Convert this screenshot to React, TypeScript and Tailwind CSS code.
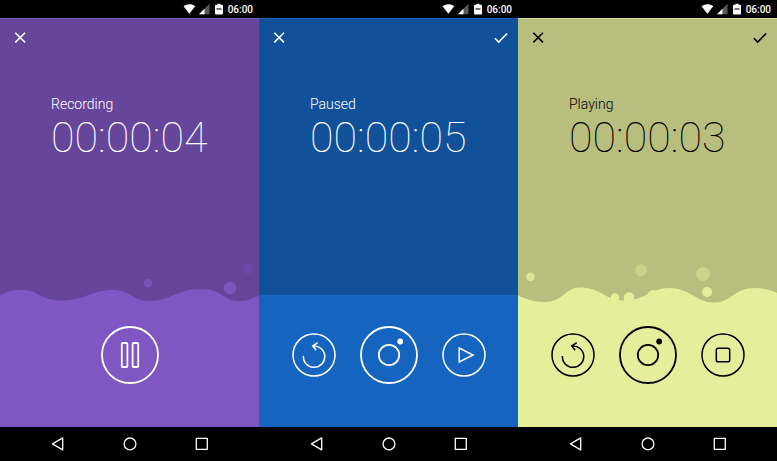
import React from "react";

type Mode = "recording" | "paused" | "playing";

interface Bubble {
  cx: number;
  cy: number;
  r: number;
  opacity: number;
}

interface Screen {
  mode: Mode;
  label: string;
  time: string;
  canConfirm: boolean;
  upper: string;
  lower: string;
  liquid: string;
  ink: string;
  wave: string;
  bubbles: Bubble[];
}

const screens: Screen[] = [
  {
    mode: "recording",
    label: "Recording",
    time: "00:00:04",
    canConfirm: false,
    upper: "bg-[#65469b] border-[#7e57c2]",
    lower: "bg-[#7e57c2]",
    liquid: "text-[#7e57c2]",
    ink: "text-white",
    wave: "M0 35C12 29 25 28 36 33C45 38 50 40.500 62 40.500C84 40.500 92 30 112 30C132 30 132 41 149 41C170 41 178 29 200 29C224 29 222 41 239 41C247 41 253 38.500 259 35.500V46H0Z",
    bubbles: [
      { cx: 148, cy: 23, r: 4.3, opacity: 0.75 },
      { cx: 230, cy: 28, r: 6.3, opacity: 0.9 },
      { cx: 248, cy: 9, r: 5, opacity: 0.3 },
    ],
  },
  {
    mode: "paused",
    label: "Paused",
    time: "00:00:05",
    canConfirm: true,
    upper: "bg-[#11519a] border-[#1565c0]",
    lower: "bg-[#1565c0]",
    liquid: "text-[#1565c0]",
    ink: "text-white",
    wave: "M0 35H259V46H0Z",
    bubbles: [],
  },
  {
    mode: "playing",
    label: "Playing",
    time: "00:00:03",
    canConfirm: true,
    upper: "bg-[#b8be7d] border-[#d3da8f]",
    lower: "bg-[#e6ee9c]",
    liquid: "text-[#e6ee9c]",
    ink: "text-black",
    wave: "M0 35.500C8 39 16 42 26 42C46 42 46 27.500 63 27.500C82 27.500 88 40.500 106 40.500C128 40.500 132 28 151 28C172 28 178 42.500 196 42.500C213 42.500 216 28 237 28C246 28 253 30 259 33V46H0Z",
    bubbles: [
      { cx: 12.5, cy: 16.7, r: 4.3, opacity: 0.8 },
      { cx: 123, cy: 10.3, r: 6, opacity: 0.4 },
      { cx: 185, cy: 14, r: 7, opacity: 0.45 },
      { cx: 189, cy: 32, r: 5, opacity: 0.95 },
      { cx: 97, cy: 37.5, r: 4.3, opacity: 1 },
      { cx: 111, cy: 37.5, r: 5.3, opacity: 1 },
      { cx: 135, cy: 35.5, r: 5.5, opacity: 1 },
    ],
  },
];

function StatusBar() {
  return (
    <div className="flex h-[18px] items-center justify-end gap-[3px] bg-black pr-1.5 text-white">
      <svg className="size-3" viewBox="0 0 12 12" fill="currentColor" aria-hidden="true">
        <path d="M.500 3.200C4 .500 9 .500 12.200 3.200L6.400 10.800Z" />
      </svg>
      <svg className="size-3" viewBox="0 0 12 12" fill="currentColor" aria-hidden="true">
        <path opacity=".35" d="M11.500 .800V11.300H1Z" />
        <path d="M6.500 5.800V11.300H1Z" />
      </svg>
      <svg className="size-3" viewBox="0 0 12 12" aria-hidden="true">
        <path fill="currentColor" d="M4.500 .800h3v1H9.200q.8 0 .8.800v8q0 .8-.8.800H2.800q-.8 0-.8-.800V2.600q0-.8.800-.8h1.700Z" />
        <path stroke="#777" strokeWidth="2" d="M3.500 6h5" />
      </svg>
      <span className="pt-px font-['Roboto',sans-serif] text-[10px] font-medium leading-4">06:00</span>
    </div>
  );
}

function RoundButton({
  label,
  large = false,
  children,
}: {
  label: string;
  large?: boolean;
  children: React.ReactNode;
}) {
  return (
    <button type="button" aria-label={label} className="rounded-full">
      {large ? (
        <svg className="block size-[58px]" viewBox="-29 -29 58 58" fill="none" stroke="currentColor" strokeWidth="1.800" aria-hidden="true">
          <circle r="28" />
          {children}
        </svg>
      ) : (
        <svg className="block size-11" viewBox="-22 -22 44 44" fill="none" stroke="currentColor" strokeWidth="1.500" aria-hidden="true">
          <circle r="21" />
          {children}
        </svg>
      )}
    </button>
  );
}

function Controls({ mode }: { mode: Mode }) {
  if (mode === "recording") {
    return (
      <RoundButton label="Pause" large>
        <rect x="-8.200" y="-12" width="5.600" height="24" rx="1" />
        <rect x="2.600" y="-12" width="5.600" height="24" rx="1" />
      </RoundButton>
    );
  }
  return (
    <>
      <RoundButton label="Restart">
        <path d="M-10.600 1A10.700 10.700 0 1 0 -1 -9" />
        <path d="M3.700 -12.300L-1.300 -9L2.200 -4.700" />
      </RoundButton>
      <RoundButton label="Record" large>
        <circle r="10.200" />
        <circle cx="11.200" cy="-13.500" r="2.900" fill="currentColor" stroke="none" />
      </RoundButton>
      {mode === "paused" ? (
        <RoundButton label="Play">
          <path d="M-4.800 -7V7L9 0Z" />
        </RoundButton>
      ) : (
        <RoundButton label="Stop">
          <rect x="-6.700" y="-6.700" width="13.400" height="13.400" rx="1.800" />
        </RoundButton>
      )}
    </>
  );
}

function NavBar() {
  return (
    <nav className="flex h-[34px] items-center justify-center gap-14 bg-black text-white">
      <button type="button" aria-label="Back" className="size-4">
        <svg className="size-4" viewBox="0 0 16 16" fill="none" stroke="currentColor" strokeWidth="1.300" strokeLinejoin="round" aria-hidden="true">
          <path d="M12.700 1.900V13.900L2.500 7.900Z" />
        </svg>
      </button>
      <button type="button" aria-label="Home" className="size-4">
        <svg className="size-4" viewBox="0 0 16 16" fill="none" stroke="currentColor" strokeWidth="1.300" aria-hidden="true">
          <circle cx="8" cy="7.900" r="5.900" />
        </svg>
      </button>
      <button type="button" aria-label="Recent apps" className="size-4">
        <svg className="size-4" viewBox="0 0 16 16" fill="none" stroke="currentColor" strokeWidth="1.300" strokeLinejoin="round" aria-hidden="true">
          <rect x="2.300" y="2.300" width="11" height="11" />
        </svg>
      </button>
    </nav>
  );
}

function Phone({ screen }: { screen: Screen }) {
  return (
    <section aria-label={screen.label} className="flex min-h-screen flex-col">
      <StatusBar />
      <div className={`flex flex-1 flex-col border-t ${screen.upper} ${screen.ink}`}>
        <div className="flex items-center justify-between pl-3 pr-2 pt-[11px]">
          <button type="button" aria-label="Close" className="size-4">
            <svg className="block size-4" viewBox="0 0 16 16" stroke="currentColor" strokeWidth="1.500" aria-hidden="true">
              <path d="M3.300 2.700L13 12.400M13 2.700L3.300 12.400" />
            </svg>
          </button>
          {screen.canConfirm && (
            <button type="button" aria-label="Confirm" className="size-4">
              <svg className="block size-4" viewBox="0 0 16 16" fill="none" stroke="currentColor" strokeWidth="1.600" aria-hidden="true">
                <path d="M.900 8.300L4.700 12.100L13.100 3.500" />
              </svg>
            </button>
          )}
        </div>
        <div className="flex flex-col pl-[51px] pt-[50px] font-['Roboto',sans-serif]">
          <p className="text-[14px] font-light leading-4">{screen.label}</p>
          <time className="text-[43px] font-thin leading-[50px]">{screen.time}</time>
        </div>
        <div className="flex flex-1 flex-col justify-end">
          <svg
            className={`block h-[46px] w-full ${screen.liquid}`}
            viewBox="0 0 259 46"
            preserveAspectRatio="none"
            fill="currentColor"
            aria-hidden="true"
          >
            <path d={screen.wave} />
            {screen.bubbles.map((b) => (
              <circle key={`${b.cx}-${b.cy}`} cx={b.cx} cy={b.cy} r={b.r} opacity={b.opacity} />
            ))}
          </svg>
        </div>
        <div className={`flex h-[121px] items-start justify-center pt-5 ${screen.lower}`}>
          <div className="flex items-center gap-6">
            <Controls mode={screen.mode} />
          </div>
        </div>
      </div>
      <NavBar />
    </section>
  );
}

export default function App() {
  return (
    <main className="grid min-h-screen grid-cols-3 bg-black">
      {screens.map((s) => (
        <Phone key={s.mode} screen={s} />
      ))}
    </main>
  );
}
